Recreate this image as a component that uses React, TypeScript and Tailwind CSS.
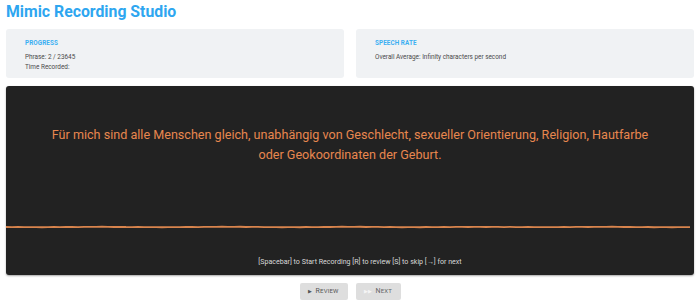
import React from "react";

// Flat waveform trace with a tiny jitter, like the idle recorder
function Waveform() {
  const pts: string[] = [];
  for (let i = 0; i <= 688; i += 6) {
    const y = 2 + Math.sin(i * 0.37) * 0.12 + Math.sin(i * 0.05) * 0.15;
    pts.push(`${i},${y.toFixed(2)}`);
  }
  return (
    <svg width="688" height="4" viewBox="0 0 688 4" className="block">
      <polyline points={pts.join(" ")} fill="none" stroke="#d8844d" strokeWidth="1.8" />
    </svg>
  );
}

function StatCard({ label, lines }: { label: string; lines: string[] }) {
  return (
    <div className="flex-1 h-[49px] rounded-[3px] bg-[#f0f2f4] pl-[19px] pt-[9px]">
      <div className="text-[6.3px] leading-[10px] font-bold text-[#3aaff2] tracking-[0.1px]">{label}</div>
      <div className="mt-[4px] text-[6.4px] leading-[10px] text-[#4a4a4a]">
        {lines.map((l) => (
          <div key={l}>{l}</div>
        ))}
      </div>
    </div>
  );
}

export default function App() {
  return (
    <div className="w-[700px] h-[306px] bg-white px-[6px] font-['Roboto','Liberation_Sans',sans-serif] overflow-hidden">
      <h1 className="pt-[1px] text-[15.8px] leading-[22px] font-bold text-[#2ea6f0]">Mimic Recording Studio</h1>

      <div className="mt-[6px] flex gap-[12px]">
        <StatCard label="PROGRESS" lines={["Phrase: 2 / 23645", "Time Recorded:"]} />
        <StatCard label="SPEECH RATE" lines={["Overall Average: Infinity characters per second"]} />
      </div>

      <div className="mt-[8px] h-[189px] rounded-[3px] bg-[#222222] shadow-[0_1px_2px_rgba(0,0,0,0.35)] flex flex-col items-center pt-[39px]">
        <p className="text-[12.6px] leading-[20px] text-[#e8874f] text-center">
          Für mich sind alle Menschen gleich, unabhängig von Geschlecht, sexueller Orientierung, Religion, Hautfarbe
          <br />
          oder Geokoordinaten der Geburt.
        </p>
        <div className="mt-[60px] w-full">
          <Waveform />
        </div>
        <p className="mt-[28px] ml-[20px] text-[7.1px] leading-[10px] text-[#d8d8d8]">
          [Spacebar] to Start Recording [R] to review [S] to skip [→] for next
        </p>
      </div>

      <div className="mt-[8px] flex justify-center gap-[8px]">
        <button className="w-[48px] h-[17px] rounded-[2px] bg-[#dedede] flex items-center justify-center gap-[3px] text-[6px] text-[#555] uppercase tracking-[0.2px]">
          <span className="text-[5px]">▶</span>
          <span>
            <span className="text-[7px]">R</span>eview
          </span>
        </button>
        <button className="w-[45px] h-[17px] rounded-[2px] bg-[#dedede] flex items-center justify-center gap-[3px] text-[6px] text-[#f5f5f5] uppercase tracking-[0.2px]">
          <span className="text-[5px]">▶▶</span>
          <span className="text-[#666]">
            <span className="text-[7px]">N</span>ext
          </span>
        </button>
      </div>
    </div>
  );
}
